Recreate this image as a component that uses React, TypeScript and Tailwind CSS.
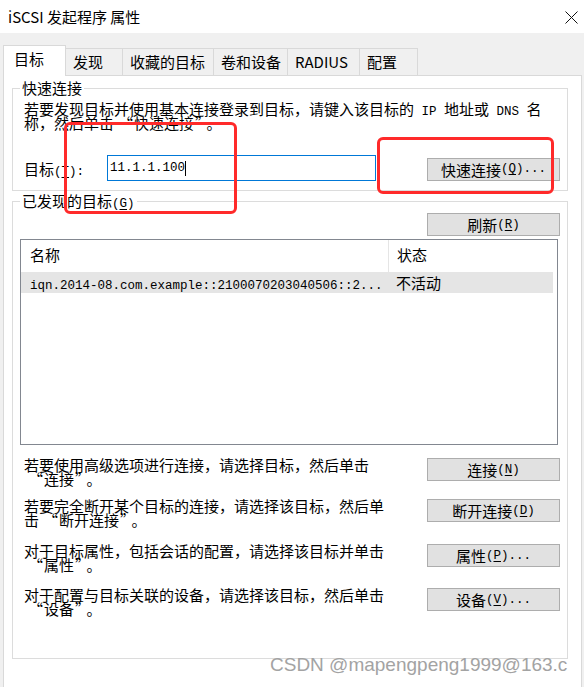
import React from 'react';

const M: React.FC<{ children: React.ReactNode }> = ({ children }) => (
  <span className="font-['Liberation_Mono',monospace] text-[12.5px] leading-[0px]">{children}</span>
);

const Key: React.FC<{ k: string; tail?: string }> = ({ k, tail = '' }) => (
  <M>
    (<span className="underline underline-offset-2">{k}</span>){tail}
  </M>
);

// wide quotes, as the dialog font draws them
const LQ = () => <span className="pl-[4px] pr-[1px]">“</span>;
const RQ = () => <span className="pl-[1px] pr-[4px]">”</span>;

const Btn: React.FC<{ children: React.ReactNode }> = ({ children }) => (
  <div className="w-[133px] h-[23px] shrink-0 bg-[#e1e1e1] border border-[#adadad] flex items-center justify-center text-[15px] leading-none">
    {children}
  </div>
);

const tabs = [
  { label: '发现', w: 'w-[57px]' },
  { label: '收藏的目标', w: 'w-[91px]' },
  { label: '卷和设备', w: 'w-[74px]' },
  { label: 'RADIUS', w: 'w-[72px]' },
  { label: '配置', w: 'w-[58px]' }
];

const actions = [
  {
    line1: '若要使用高级选项进行连接，请选择目标，然后单击',
    line2: <><LQ />连接<RQ />。</>,
    btn: <>连接<Key k="N" /></>,
    mt: 'mt-[13px]'
  },
  {
    line1: '若要完全断开某个目标的连接，请选择该目标，然后单',
    line2: <>击<LQ />断开连接<RQ />。</>,
    btn: <>断开连接<Key k="D" /></>,
    mt: 'mt-[13px]'
  },
  {
    line1: '对于目标属性，包括会话的配置，请选择该目标并单击',
    line2: <><LQ />属性<RQ />。</>,
    btn: <>属性<Key k="P" tail="..." /></>,
    mt: 'mt-[17px]'
  },
  {
    line1: '对于配置与目标关联的设备，请选择该目标，然后单击',
    line2: <><LQ />设备<RQ />。</>,
    btn: <>设备<Key k="V" tail="..." /></>,
    mt: 'mt-[16px]'
  }
];

export default function App() {
  return (
    <div className="relative w-[584px] h-[687px] overflow-hidden bg-[#f0f0f0] text-black font-['Noto_Sans_CJK_SC',sans-serif]">
      {/* title bar */}
      <div className="h-[33px] bg-white flex items-center justify-between pl-[8px] pr-[6px]">
        <span className="text-[15px] leading-none">iSCSI 发起程序 属性</span>
        <svg width="13" height="13" viewBox="0 0 13 13" className="mt-[1px]">
          <path d="M0.5 0.5 L12.5 12.5 M12.5 0.5 L0.5 12.5" stroke="#111" strokeWidth="1" />
        </svg>
      </div>

      <div className="pl-[3px] pr-[2px] pt-[12px]">
        {/* tab strip */}
        <div className="flex items-end h-[30px] relative z-10">
          <div className="w-[63px] h-[31px] -mb-px bg-white border border-b-0 border-[#d9d9d9] pl-[10px] pb-[3px] flex items-center text-[15px]">
            目标
          </div>
          {tabs.map((t) => (
            <div
              key={t.label}
              className={`${t.w} h-[27px] border-t border-r border-[#d9d9d9] pl-[7px] flex items-center text-[15px]`}
            >
              {t.label}
            </div>
          ))}
        </div>

        {/* tab panel */}
        <div className="h-[640px] bg-white border border-[#d9d9d9] pt-[12px] pl-[8px] pr-[13px] text-[15px]">
          {/* quick connect */}
          <div className="h-[103px] border border-[#dcdcdc] flex flex-col">
            <span className="-mt-[9px] ml-[7px] px-[2px] w-fit bg-white leading-[16px]">快速连接</span>
            <p className="mt-[6px] pl-[11px] leading-[14px]">
              若要发现目标并使用基本连接登录到目标，请键入该目标的<M> IP </M>地址或<M> DNS </M>名
              <br />
              称，然后单击<LQ />快速连接<RQ />。
            </p>
            <div className="mt-[25px] pl-[11px] pr-[7px] flex items-center">
              <span className="w-[83px] leading-none">
                目标<Key k="T" tail=":" />
              </span>
              <div className="w-[269px] h-[26px] border border-[#0078d7] flex items-center pl-[2px]">
                <M>11.1.1.100</M>
                <span className="w-px h-[15px] bg-black" />
              </div>
              <div className="ml-auto mt-[2px]">
                <Btn>
                  快速连接<Key k="Q" tail="..." />
                </Btn>
              </div>
            </div>
          </div>

          {/* discovered targets */}
          <div className="mt-[10px] h-[458px] border border-[#dcdcdc] flex flex-col">
            <span className="-mt-[9px] ml-[7px] px-[2px] w-fit bg-white leading-[16px]">
              已发现的目标<Key k="G" />
            </span>
            <div className="mt-[4px] self-end mr-[7px]">
              <Btn>
                刷新<Key k="R" />
              </Btn>
            </div>
            <div className="mt-[3px] ml-[7px] w-[538px] h-[206px] border border-[#828790]">
              <div className="flex h-[32px]">
                <div className="w-[368px] border-r border-[#e5e5e5] pl-[9px] pt-[7px] leading-[16px]">名称</div>
                <div className="w-[164px] pl-[8px] pt-[7px] leading-[16px]">状态</div>
              </div>
              <div className="flex h-[21px] w-[532px] bg-[#e5e5e5] items-center">
                <div className="w-[368px] pl-[9px] leading-none">
                  <M>iqn.2014-08.com.example::2100070203040506::2...</M>
                </div>
                <div className="pl-[7px] leading-none">不活动</div>
              </div>
            </div>

            {actions.map((a, i) => (
              <div key={i} className={`${a.mt} pl-[11px] pr-[7px] flex items-start justify-between`}>
                <p className="leading-[14px]">
                  {a.line1}
                  <br />
                  {a.line2}
                </p>
                <Btn>{a.btn}</Btn>
              </div>
            ))}
          </div>
        </div>
      </div>

      {/* screenshot annotations */}
      <div className="absolute left-[64px] top-[122px] w-[173px] h-[92px] border-[3px] border-[#ff2a2a] rounded-[6px]" />
      <div className="absolute left-[377px] top-[137px] w-[177px] h-[57px] border-[3px] border-[#ff2a2a] rounded-[6px]" />
      <div className="absolute left-[270px] top-[655px] whitespace-nowrap text-[19px] leading-none text-[#a3a3a3] font-['Liberation_Sans',sans-serif]">
        CSDN @mapengpeng1999@163.c
      </div>
    </div>
  );
}
